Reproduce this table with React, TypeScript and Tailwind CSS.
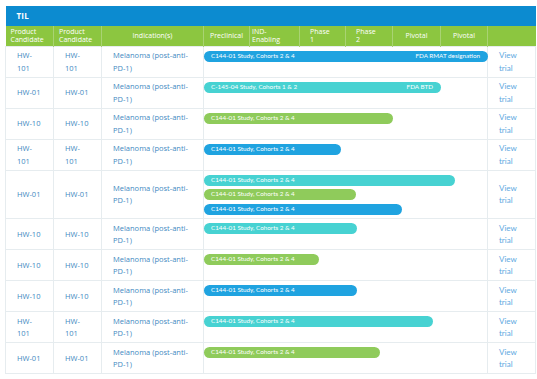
type Bar = { color: string; end: number; label: string; note?: string };
type Row = { code: string[]; bars: Bar[] };

const BLUE = 'bg-[#1fa3e0]';
const TEAL = 'bg-[#47d2d2]';
const GREEN = 'bg-[#8fcb5b]';
const STUDY = 'C144-01 Study, Cohorts 2 & 4';

// bar end is the x position in the screenshot, phase cell starts at 203
const rows: Row[] = [
  { code: ['HW-', '101'], bars: [{ color: BLUE, end: 487, label: STUDY, note: 'FDA RMAT designation' }] },
  { code: ['HW-01'], bars: [{ color: TEAL, end: 440, label: 'C-145-04 Study, Cohorts 1 & 2', note: 'FDA BTD' }] },
  { code: ['HW-10'], bars: [{ color: GREEN, end: 392, label: STUDY }] },
  { code: ['HW-', '101'], bars: [{ color: BLUE, end: 340, label: STUDY }] },
  {
    code: ['HW-01'],
    bars: [
      { color: TEAL, end: 454, label: STUDY },
      { color: GREEN, end: 355, label: STUDY },
      { color: BLUE, end: 401, label: STUDY },
    ],
  },
  { code: ['HW-10'], bars: [{ color: TEAL, end: 356, label: STUDY }] },
  { code: ['HW-10'], bars: [{ color: GREEN, end: 318, label: STUDY }] },
  { code: ['HW-10'], bars: [{ color: BLUE, end: 356, label: STUDY }] },
  { code: ['HW-', '101'], bars: [{ color: TEAL, end: 432, label: STUDY }] },
  { code: ['HW-01'], bars: [{ color: GREEN, end: 379, label: STUDY }] },
];

const widths = [48, 48, 102, 46, 50, 46, 47, 48, 47, 48];

function Lines({ lines }: { lines: string[] }) {
  return (
    <>
      {lines.map((l, i) => (
        <span key={i} className="block whitespace-nowrap">{l}</span>
      ))}
    </>
  );
}

export default function App() {
  const th = 'border-l border-[#a9d373] first:border-l-0 font-normal align-middle text-[7px] leading-[8px] whitespace-nowrap overflow-hidden';
  const td = 'border border-[#e6ecef] align-middle px-[11px] py-[2.5px] whitespace-nowrap';

  return (
    <div className="bg-white w-[537px] h-[379px] pl-[5px] pt-[6px]" style={{ fontFamily: '"Open Sans", Arial, sans-serif' }}>
      <table className="table-fixed border-collapse w-[530px] text-white">
        <colgroup>
          {widths.map((w, i) => (
            <col key={i} style={{ width: w }} />
          ))}
        </colgroup>
        <thead>
          <tr className="bg-[#0c8bd0] h-[20px]">
            <th colSpan={10} className="text-left pl-[11px] text-[8px] font-bold tracking-wide">TIL</th>
          </tr>
          <tr className="bg-[#8cc640] h-[20px]">
            <th className={`${th} text-left pl-[5px]`}><Lines lines={['Product', 'Candidate']} /></th>
            <th className={`${th} text-left pl-[5px]`}><Lines lines={['Product', 'Candidate']} /></th>
            <th className={`${th} text-center`}>Indication(s)</th>
            <th className={`${th} text-center`}>Preclinical</th>
            <th className={`${th} text-left pl-[2px]`}><Lines lines={['IND-', 'Enabling']} /></th>
            <th className={`${th} text-left pl-[10px]`}><Lines lines={['Phase', '1']} /></th>
            <th className={`${th} text-left pl-[10px]`}><Lines lines={['Phase', '2']} /></th>
            <th className={`${th} text-center`}>Pivotal</th>
            <th className={`${th} text-center`}>Pivotal</th>
            <th className={th}></th>
          </tr>
        </thead>
        <tbody className="text-[7.5px] leading-[12.5px] text-[#3f8ac2]">
          {rows.map((r, i) => (
            <tr key={i}>
              <td className={td}><Lines lines={r.code} /></td>
              <td className={td}><Lines lines={r.code} /></td>
              <td className={td}><Lines lines={['Melanoma (post-anti-', 'PD-1)']} /></td>
              <td colSpan={6} className="border border-[#e6ecef] align-top pt-[4px] pb-[3.5px]">
                <div className="flex flex-col gap-[3.5px]">
                  {r.bars.map((b, j) => (
                    <div
                      key={j}
                      className={`${b.color} h-[11px] rounded-full flex items-center justify-between pl-[7px] pr-[8px] text-white text-[6.3px] leading-none whitespace-nowrap overflow-hidden`}
                      style={{ width: b.end - 203, fontFamily: 'Lato, sans-serif' }}
                    >
                      <span>{b.label}</span>
                      {b.note && <span>{b.note}</span>}
                    </div>
                  ))}
                </div>
              </td>
              <td className={`${td} text-[#5ea9df] text-[8px]`} style={{ fontFamily: 'Lato, sans-serif' }}>
                <Lines lines={['View', 'trial']} />
              </td>
            </tr>
          ))}
        </tbody>
      </table>
    </div>
  );
}
